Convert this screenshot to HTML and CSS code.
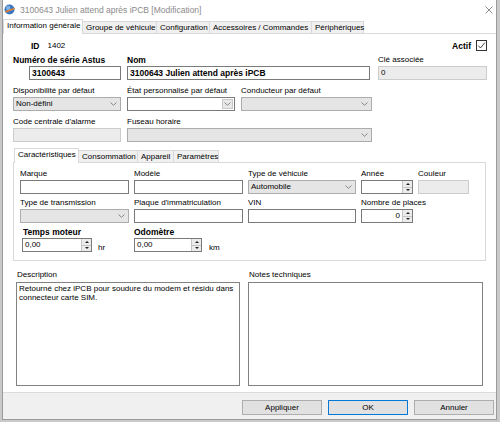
FILE: index.html
```html
<!DOCTYPE html>
<html lang="fr">
<head>
    <meta charset="UTF-8">
    <title>3100643 Julien attend après iPCB [Modification]</title>
    <link rel="stylesheet" href="styles.css">
</head>
<body>

<div class="window">

    <!-- title bar -->
    <div class="titlebar">
        <svg class="app-icon" width="11" height="11" viewBox="0 0 11 11">
            <circle cx="5.5" cy="5.5" r="5" fill="#3b78c2"/>
            <circle cx="4.2" cy="4" r="2.2" fill="#7fb0e6"/>
            <path d="M1 7.5 C3 6.2 7 5 10.6 3.8 L10.8 5.2 C7.5 6.4 4 7.6 1.6 8.8 Z" fill="#e8822c"/>
        </svg>
        <span class="title">3100643 Julien attend après iPCB [Modification]</span>
        <svg class="close" width="8" height="8" viewBox="0 0 8 8">
            <path d="M0.5 0.5 L7.5 7.5 M7.5 0.5 L0.5 7.5" stroke="#6e6e6e" stroke-width="0.8"/>
        </svg>
    </div>

    <!-- main tabs -->
    <div class="tabs">
        <div class="tab active">Information générale</div>
        <div class="tab">Groupe de véhicule</div>
        <div class="tab">Configuration</div>
        <div class="tab">Accessoires / Commandes</div>
        <div class="tab">Périphériques</div>
    </div>

    <div class="page">

        <div class="id-row">
            <span class="bold id-label">ID</span>
            <span class="id-value">1402</span>
            <span class="bold actif">Actif</span>
            <span class="check">
                <svg width="9" height="9" viewBox="0 0 9 9">
                    <path d="M1.2 4.6 L3.5 7 L7.9 1.6" fill="none" stroke="#333" stroke-width="0.9"/>
                </svg>
            </span>
        </div>

        <div class="main-grid">
            <div class="field">
                <label class="bold">Numéro de série Astus</label>
                <div class="input bold serial">3100643</div>
            </div>
            <div class="field span2">
                <label class="bold">Nom</label>
                <div class="input bold name">3100643 Julien attend après iPCB</div>
            </div>
            <div class="field">
                <label>Clé associée</label>
                <div class="input disabled">0</div>
            </div>

            <div class="field">
                <label>Disponibilité par défaut</label>
                <div class="combo">Non-défini<svg class="chev" width="7" height="4" viewBox="0 0 7 4"><path d="M0.5 0.5 L3.5 3.3 L6.5 0.5" fill="none" stroke="#707070" stroke-width="0.8"/></svg></div>
            </div>
            <div class="field">
                <label>État personnalisé par défaut</label>
                <div class="input edit-combo"><span class="drop"><svg width="7" height="4" viewBox="0 0 7 4"><path d="M0.5 0.5 L3.5 3.3 L6.5 0.5" fill="none" stroke="#707070" stroke-width="0.8"/></svg></span></div>
            </div>
            <div class="field">
                <label>Conducteur par défaut</label>
                <div class="combo"><svg class="chev" width="7" height="4" viewBox="0 0 7 4"><path d="M0.5 0.5 L3.5 3.3 L6.5 0.5" fill="none" stroke="#707070" stroke-width="0.8"/></svg></div>
            </div>
            <div></div>

            <div class="field">
                <label>Code centrale d'alarme</label>
                <div class="input disabled"></div>
            </div>
            <div class="field span2">
                <label>Fuseau horaire</label>
                <div class="combo"><svg class="chev" width="7" height="4" viewBox="0 0 7 4"><path d="M0.5 0.5 L3.5 3.3 L6.5 0.5" fill="none" stroke="#707070" stroke-width="0.8"/></svg></div>
            </div>
        </div>

        <!-- sub tabs -->
        <div class="subtabs">
            <div class="tab active">Caractéristiques</div>
            <div class="tab">Consommation</div>
            <div class="tab">Appareil</div>
            <div class="tab">Paramètres</div>
        </div>

        <div class="subpanel">
            <div class="sub-grid">
                <div class="field">
                    <label>Marque</label>
                    <div class="input"></div>
                </div>
                <div class="field">
                    <label>Modèle</label>
                    <div class="input"></div>
                </div>
                <div class="field">
                    <label>Type de véhicule</label>
                    <div class="combo">Automobile<svg class="chev" width="7" height="4" viewBox="0 0 7 4"><path d="M0.5 0.5 L3.5 3.3 L6.5 0.5" fill="none" stroke="#707070" stroke-width="0.8"/></svg></div>
                </div>
                <div class="field">
                    <label>Année</label>
                    <div class="input spin"><span class="spin-value"></span><span class="spinner"><i class="up"></i><i class="down"></i></span></div>
                </div>
                <div class="field">
                    <label>Couleur</label>
                    <div class="input disabled"></div>
                </div>

                <div class="field">
                    <label>Type de transmission</label>
                    <div class="combo"><svg class="chev" width="7" height="4" viewBox="0 0 7 4"><path d="M0.5 0.5 L3.5 3.3 L6.5 0.5" fill="none" stroke="#707070" stroke-width="0.8"/></svg></div>
                </div>
                <div class="field">
                    <label>Plaque d'immatriculation</label>
                    <div class="input"></div>
                </div>
                <div class="field">
                    <label>VIN</label>
                    <div class="input"></div>
                </div>
                <div class="field">
                    <label>Nombre de places</label>
                    <div class="input spin"><span class="spin-value right">0</span><span class="spinner"><i class="up"></i><i class="down"></i></span></div>
                </div>
                <div></div>

                <div class="field">
                    <label class="bold temps-label">Temps moteur</label>
                    <div class="unit-row">
                        <div class="input spin temps"><span class="spin-value">0,00</span><span class="spinner"><i class="up"></i><i class="down"></i></span></div>
                        <span class="unit hr">hr</span>
                    </div>
                </div>
                <div class="field">
                    <label class="bold">Odomètre</label>
                    <div class="unit-row">
                        <div class="input spin odo"><span class="spin-value">0,00</span><span class="spinner"><i class="up"></i><i class="down"></i></span></div>
                        <span class="unit km">km</span>
                    </div>
                </div>
            </div>
        </div>

        <div class="notes">
            <div class="field">
                <label>Description</label>
                <div class="textarea">Retourné chez iPCB pour soudure du modem et résidu dans connecteur carte SIM.</div>
            </div>
            <div class="field">
                <label>Notes techniques</label>
                <div class="textarea"></div>
            </div>
        </div>

    </div>

    <!-- dialog buttons -->
    <div class="buttons">
        <div class="btn">Appliquer</div>
        <div class="btn default">OK</div>
        <div class="btn">Annuler</div>
    </div>

</div>

</body>
</html>
```

FILE: styles.css
```css
*{
   margin:0;
   padding:0;
   box-sizing: border-box;
}
body{
   width:500px;
   height:422px;
   overflow:hidden;
   background:#c9c9c9;
   font-family:"Liberation Sans", Arial, sans-serif;
   font-size:8px;
   color:#000;
}
.bold{
   font-weight:bold;
   font-size:8.5px;
}

/* window */
.window{
   width:495px;
   height:420px;
   margin-left:2px;
   background:#fff;
   border:1px solid #9a9a9a;
   border-top:none;
   display:flex;
   flex-direction:column;
}
.titlebar{
   height:19px;
   display:flex;
   align-items:center;
   padding-left:1px;
}
.app-icon{
   margin-right:5px;
}
.title{
   font-size:8.5px;
   color:#8a8a8a;
}
.close{
   margin-left:auto;
   margin-right:3px;
}

/* tabs */
.tabs,
.subtabs{
   height:14px;
   display:flex;
   align-items:flex-end;
}
.tab{
   height:12px;
   line-height:11px;
   padding:0 3px;
   background:#f0f0f0;
   border:1px solid #d9d9d9;
   border-bottom:none;
   margin-left:-1px;
   white-space:nowrap;
}
.tab:first-child{
   margin-left:0;
}
.tab.active{
   height:15px;
   line-height:12px;
   background:#fff;
   margin-bottom:-1px;
   position:relative;
   z-index:1;
}
.tabs .tab:nth-child(2){ width:75px; }
.tabs .tab:nth-child(3){ width:54px; }
.tabs .tab:nth-child(4){ width:103px; }
.tabs .tab:nth-child(5){ width:53px; }
.tabs .tab.active{ width:80px; }

.page{
   height:360px;
   border-top:1px solid #d9d9d9;
   border-bottom:1px solid #dcdcdc;
   padding:0 9px 0 10px;
   background:#fff;
}

.id-row{
   height:11px;
   margin-top:6px;
   display:flex;
   align-items:center;
}
.id-label{
   margin-left:18px;
}
.id-value{
   margin-left:8px;
}
.actif{
   margin-left:auto;
}
.check{
   width:11px;
   height:11px;
   margin-left:5px;
   border:1px solid #333;
   display:flex;
   align-items:center;
   justify-content:center;
}

/* fields */
.field label{
   display:block;
   height:10px;
   line-height:10px;
   margin-bottom:1px;
   white-space:nowrap;
}
.input,
.combo{
   height:14px;
   line-height:12px;
   border:1px solid #7a7a7a;
   background:#fff;
   padding-left:2px;
   white-space:nowrap;
   overflow:hidden;
}
.input.disabled{
   background:#ececec;
   border-color:#cccccc;
}
.combo{
   background:#e5e5e5;
   border-color:#acacac;
   display:flex;
   align-items:center;
}
.chev{
   margin-left:auto;
   margin-right:3px;
}
.edit-combo{
   display:flex;
   justify-content:flex-end;
   padding:1px;
}
.drop{
   width:11px;
   height:10px;
   background:#e8e8e8;
   border:1px solid #c8c8c8;
   display:flex;
   align-items:center;
   justify-content:center;
}

.main-grid{
   display:grid;
   grid-template-columns:108px 108px 131px 109px;
   column-gap:6px;
   row-gap:6px;
   margin-top:4px;
}
.span2{
   grid-column:span 2;
}
.serial{
   margin-left:16px;
}
.name{
   margin-right:2px;
}

/* spinners */
.spin{
   display:flex;
   padding:0 0 0 2px;
}
.spin-value{
   flex:1;
}
.spin-value.right{
   text-align:right;
   padding-right:2px;
}
.spinner{
   width:10px;
   height:12px;
   border-left:1px solid #c4c4c4;
   background:#ececec;
   display:flex;
   flex-direction:column;
}
.spinner i{
   flex:1;
   display:flex;
   align-items:center;
   justify-content:center;
}
.spinner i::after{
   content:"";
   border-left:2px solid transparent;
   border-right:2px solid transparent;
}
.spinner .up{
   border-bottom:1px solid #c4c4c4;
}
.spinner .up::after{
   border-bottom:2px solid #222;
}
.spinner .down::after{
   border-top:2px solid #222;
}

/* characteristics panel */
.subtabs{
   margin-top:6px;
   padding-left:1px;
}
.subtabs .tab:nth-child(2){ width:60px; }
.subtabs .tab:nth-child(3){ width:37px; }
.subtabs .tab:nth-child(4){ width:46px; }
.subtabs .tab.active{ width:65px; }

.subpanel{
   width:473px;
   height:99px;
   border:1px solid #d9d9d9;
   padding:6px 0 0 6px;
}
.sub-grid{
   display:grid;
   grid-template-columns:109px 109px 108px 52px 51px;
   column-gap:5px;
   row-gap:4px;
}
.temps-label{
   padding-left:3px;
}
.unit-row{
   display:flex;
   align-items:flex-end;
}
.temps{
   width:70px;
   margin-left:2px;
}
.odo{
   width:68px;
}
.unit{
   line-height:10px;
   margin-bottom:-1px;
}
.hr{
   margin-left:6px;
}
.km{
   margin-left:7px;
}

/* notes */
.notes{
   display:grid;
   grid-template-columns:224px 235px;
   column-gap:8px;
   margin-top:9px;
   margin-left:3px;
}
.notes label{
   margin-bottom:2px;
   padding-left:1px;
}
.textarea{
   height:104px;
   border:1px solid #828282;
   padding:1px 2px;
   line-height:9px;
}

/* bottom buttons */
.buttons{
   flex:1;
   background:#f0f0f0;
   display:flex;
   justify-content:flex-end;
   gap:6px;
   padding:7px 2px 0 0;
}
.btn{
   width:80px;
   height:15px;
   line-height:13px;
   text-align:center;
   background:#e1e1e1;
   border:1px solid #adadad;
}
.btn.default{
   border-color:#0078d7;
}
```
